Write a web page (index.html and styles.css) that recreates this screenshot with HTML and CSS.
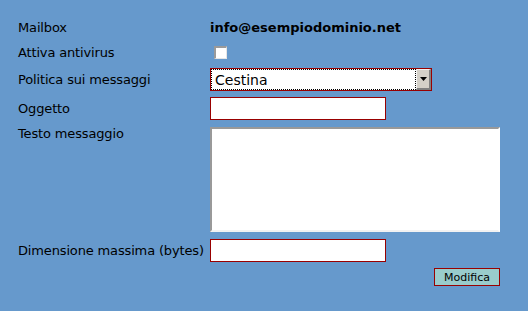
FILE: index.html
```html
<!DOCTYPE html>
<html lang="it">
<head>
<meta charset="utf-8">
<title>Mailbox</title>
<link rel="stylesheet" href="styles.css">
</head>
<body>
<form class="form">
  <div class="row row-mailbox">
    <span class="label">Mailbox</span>
    <span class="value">info@esempiodominio.net</span>
  </div>
  <div class="row row-check">
    <label class="label" for="av">Attiva antivirus</label>
    <span><input type="checkbox" id="av" class="check"></span>
  </div>
  <div class="row row-select">
    <label class="label" for="pol">Politica sui messaggi</label>
    <span class="select-box">
      <select id="pol" class="sel"><option>Cestina</option></select>
      <span class="sel-btn"><svg width="7" height="4" viewBox="0 0 7 4"><path d="M0 0h7L3.5 4z" fill="#000"/></svg></span>
    </span>
  </div>
  <div class="row row-input">
    <label class="label" for="ogg">Oggetto</label>
    <span><input type="text" id="ogg" class="field"></span>
  </div>
  <div class="row row-area">
    <label class="label label-top" for="txt">Testo messaggio</label>
    <span><textarea id="txt" class="area"></textarea></span>
  </div>
  <div class="row row-input2">
    <label class="label" for="dim">Dimensione massima (bytes)</label>
    <span><input type="text" id="dim" class="field"></span>
  </div>
  <div class="actions">
    <button type="button" class="btn">Modifica</button>
  </div>
</form>
</body>
</html>
```
FILE: styles.css
```css
html, body {
  margin: 0;
  padding: 0;
  background: #6699cc;
}
body {
  font-family: "DejaVu Sans", Verdana, sans-serif;
  font-size: 13px;
  color: #000;
  width: 528px;
  height: 311px;
  overflow: hidden;
}
.form {
  display: flex;
  flex-direction: column;
  padding: 20px 0 0 18px;
  margin: 0;
}
.row {
  display: grid;
  grid-template-columns: 192px auto;
  align-items: center;
}
.row > span {
  display: flex;
  align-items: center;
}
.label {
  line-height: 15px;
  letter-spacing: -0.15px;
}
.label-top {
  align-self: start;
  margin-top: -1px;
}
.row-mailbox {
  height: 15px;
}
.value {
  font-weight: bold;
  line-height: 15px;
}
.row-check {
  margin-top: 8px;
  height: 19px;
}
.check {
  appearance: none;
  -webkit-appearance: none;
  width: 13px;
  height: 13px;
  margin: 3px 0 3px 4px;
  box-sizing: border-box;
  background: #fff;
  border-top: 2px solid #9a9a9a;
  border-left: 2px solid #9a9a9a;
  border-right: 1px solid #e6e6e6;
  border-bottom: 1px solid #e6e6e6;
}
.row-select {
  margin-top: 6px;
  height: 23px;
}
.select-box {
  display: flex;
  width: 222px;
  height: 23px;
  box-sizing: border-box;
  border: 1px solid #990000;
  background: #fff;
}
.sel {
  appearance: none;
  -webkit-appearance: none;
  flex: 1;
  height: 21px;
  margin: 0;
  box-sizing: border-box;
  border: 1px dotted #000;
  background: #fff;
  font-family: "DejaVu Sans", Verdana, sans-serif;
  font-size: 14px;
  color: #000;
  padding: 0 0 0 3px;
  border-radius: 0;
  outline: none;
}
.sel-btn {
  width: 15px;
  height: 21px;
  box-sizing: border-box;
  background: #d4d0c8;
  border-top: 1px solid #f4f4f4;
  border-left: 1px solid #f4f4f4;
  border-right: 2px solid #808080;
  border-bottom: 2px solid #808080;
  display: flex;
  align-items: center;
  justify-content: center;
}
.row-input {
  margin-top: 6px;
  height: 23px;
}
.field {
  width: 176px;
  height: 23px;
  box-sizing: border-box;
  border: 1px solid #990000;
  background: #fff;
  margin: 0;
  padding: 0 2px;
  font-family: "DejaVu Sans", Verdana, sans-serif;
  font-size: 13px;
  outline: none;
}
.row-area {
  margin-top: 7px;
  height: 105px;
}
.area {
  display: block;
  width: 290px;
  height: 105px;
  box-sizing: border-box;
  margin: 0;
  border-top: 2px solid #999;
  border-left: 2px solid #999;
  border-right: 2px solid #fff;
  border-bottom: 2px solid #f2f2f2;
  background: #fff;
  resize: none;
  outline: none;
}
.row-input2 {
  margin-top: 7px;
  height: 23px;
}
.actions {
  display: flex;
  justify-content: flex-end;
  width: 482px;
  margin-top: 6px;
}
.btn {
  width: 66px;
  height: 18px;
  box-sizing: border-box;
  border: 1px solid #990000;
  background: #99cccc;
  font-family: "DejaVu Sans", Verdana, sans-serif;
  font-size: 11px;
  color: #000;
  padding: 0;
  margin: 0;
  line-height: 15px;
}
```
